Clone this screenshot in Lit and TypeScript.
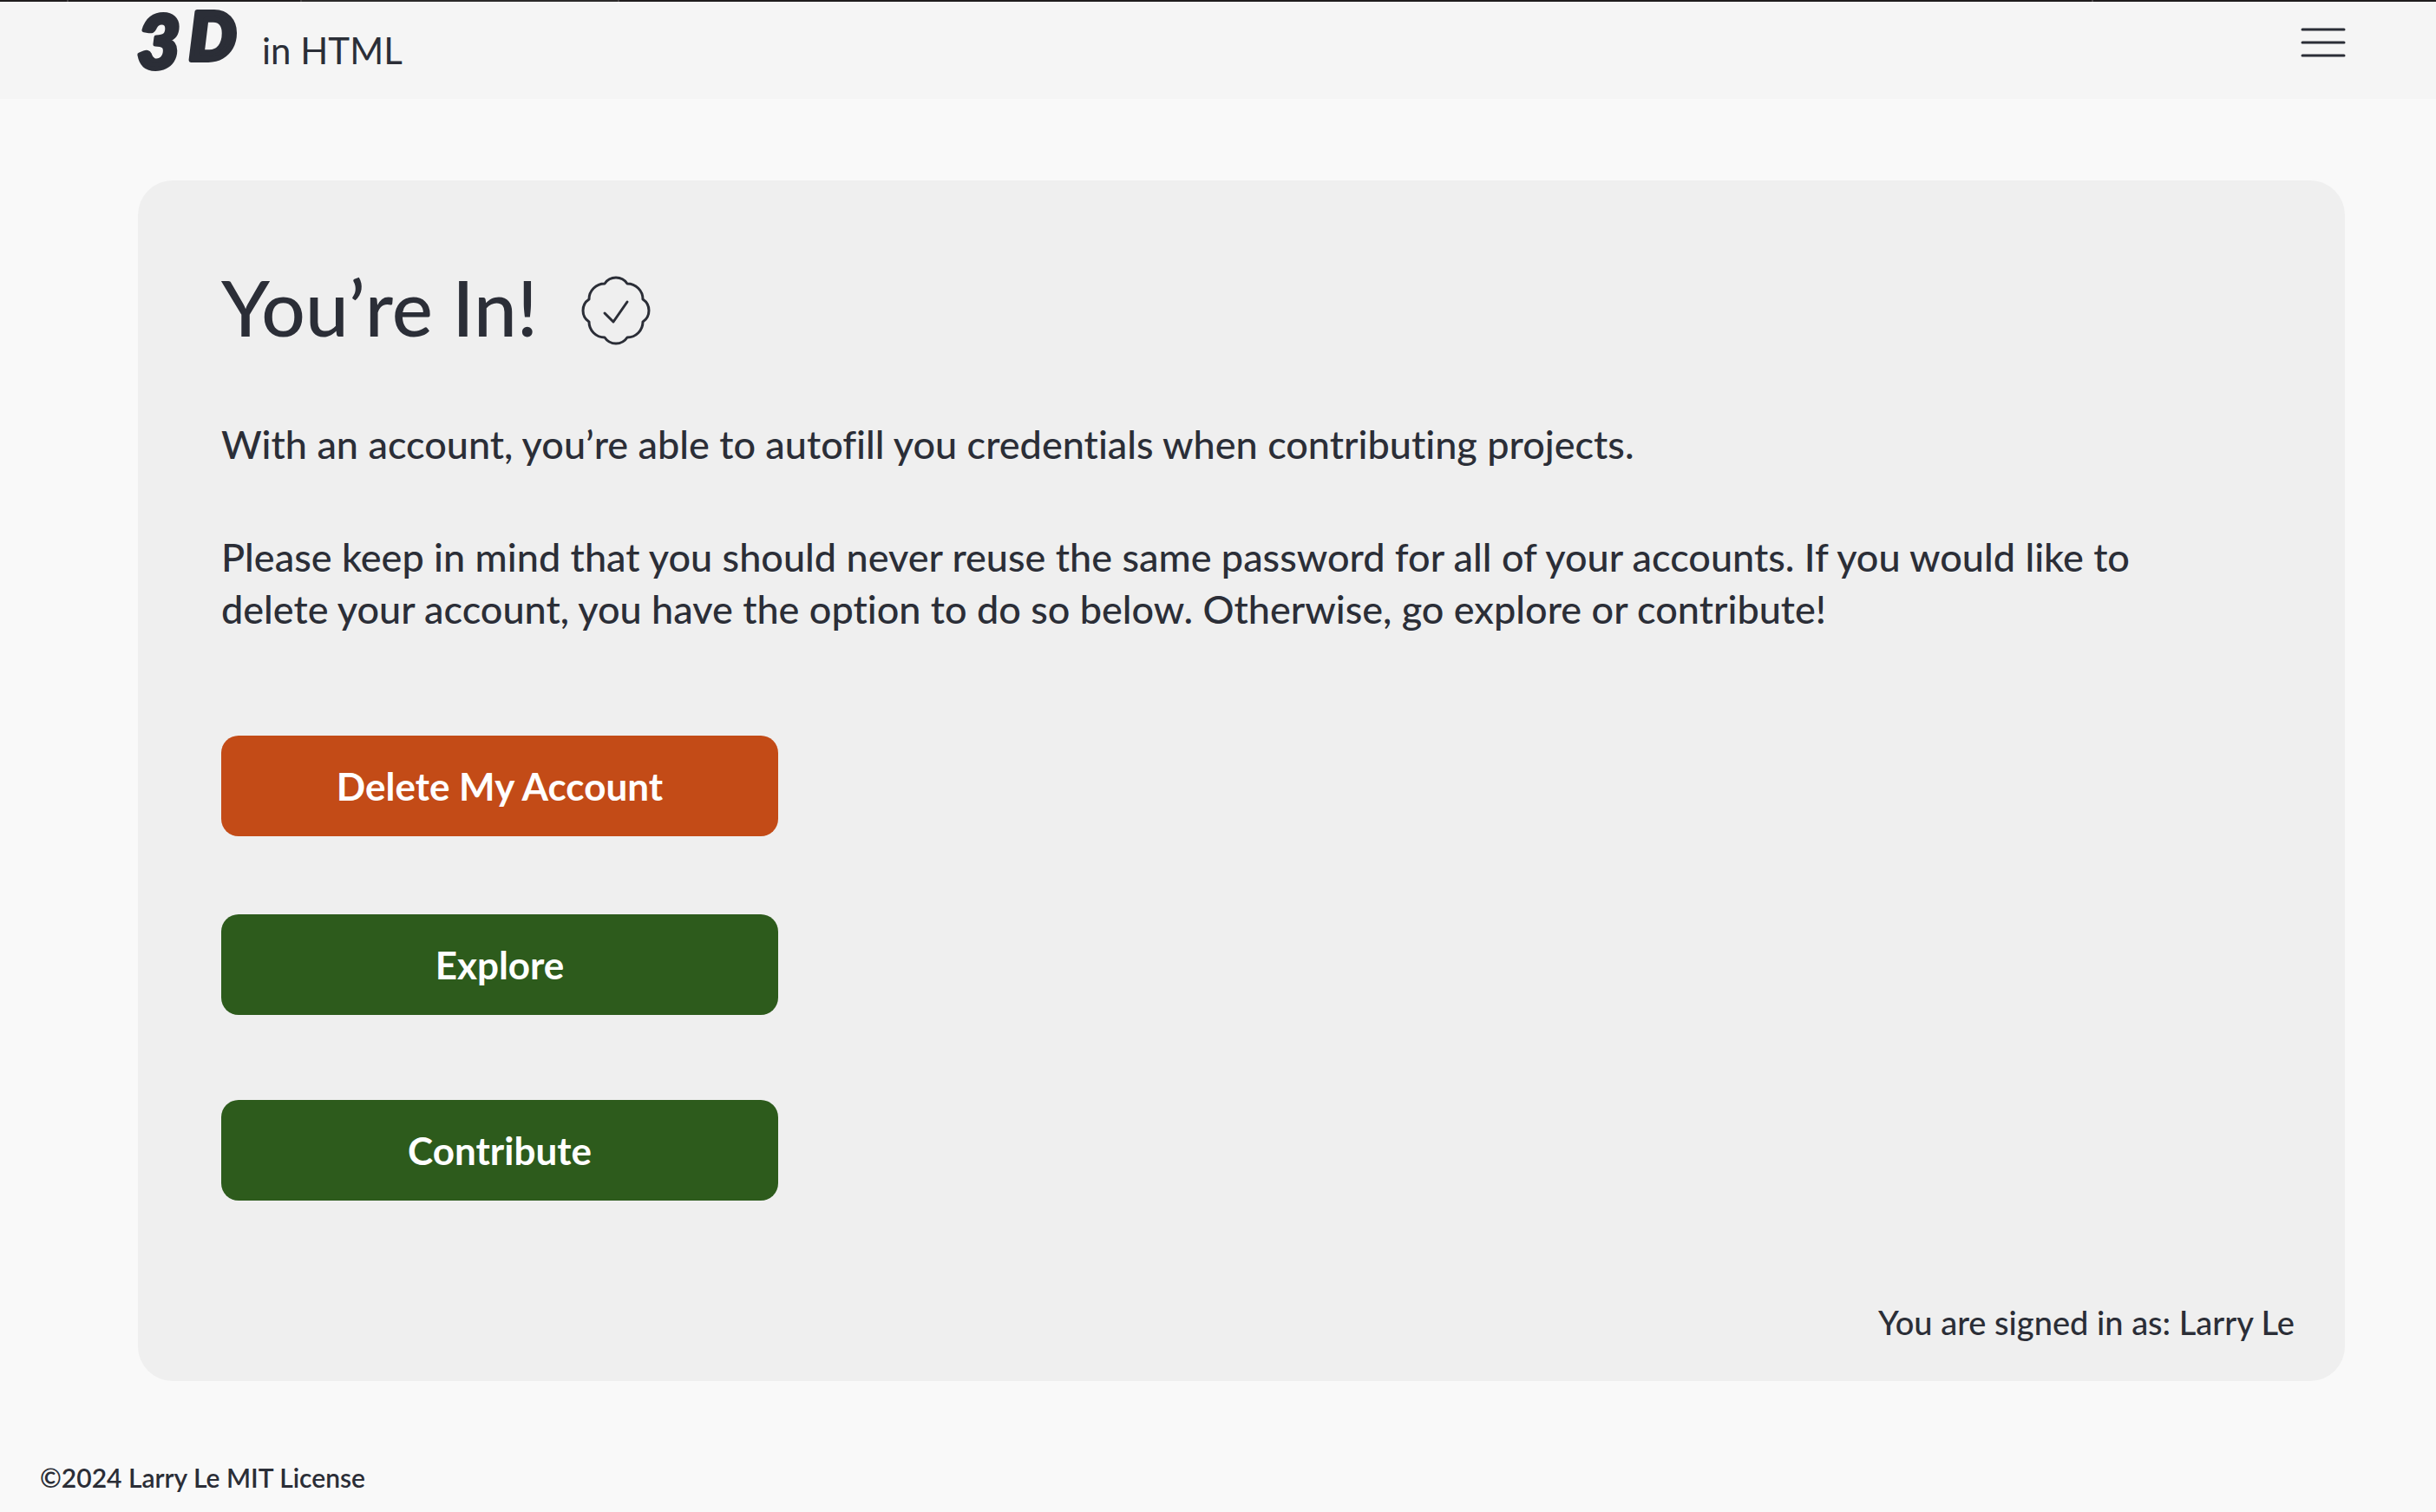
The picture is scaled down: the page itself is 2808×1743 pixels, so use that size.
import { LitElement, html, css } from "lit";
import { customElement, property } from "lit/decorators.js";

@customElement("site-header")
class SiteHeader extends LitElement {
  static styles = css`
    :host { display: block; }
    .strip {
      height: 2px;
      background: linear-gradient(
        to right,
        #1f1c1d 77px, #454243 77px 79px,
        #1f1c1d 79px 346px, #454243 346px 348px,
        #2c2a2a 348px 712px, #454243 712px 714px,
        #1f1c1d 714px calc(100% - 397px), #454243 calc(100% - 397px) calc(100% - 395px),
        #1f1c1d calc(100% - 395px)
      );
    }
    .bar {
      display: flex;
      justify-content: space-between;
      align-items: flex-start;
      height: 112px;
      padding: 0 104px 0 152px;
      background: #f5f5f5;
    }
    .brand {
      display: flex;
      gap: 22px;
      color: inherit;
      text-decoration: none;
    }
    .mark { display: block; overflow: visible; width: 128px; height: 90px; fill: #2b2e37; stroke: #2b2e37; stroke-linejoin: round; }
    .three { font: italic 900 86px Lato, sans-serif; stroke-width: 5; }
    .dee { font: italic 900 76px Lato, sans-serif; stroke-width: 6; }
    .name { padding-top: 26px; font-size: 42px; line-height: 60px; }
    .menu { margin-top: 20px; padding: 0; border: 0; background: none; cursor: pointer; }
    .lines { display: block; width: 52px; height: 52px; stroke: #2b2e37; stroke-width: 3; stroke-linecap: round; }
  `;
  render() {
    return html`
      <div class="strip"></div>
      <header class="bar">
        <a class="brand" href="#">
          <svg class="mark" viewBox="0 0 128 90" role="img" aria-label="3D">
            <text class="three" x="6" y="77">3</text>
            <text class="dee" x="66" y="67">D</text>
          </svg>
          <span class="name">in HTML</span>
        </a>
        <button class="menu" type="button" aria-label="Menu">
          <svg class="lines" viewBox="0 0 52 52"><path d="M2 12H50M2 27H50M2 42H50" /></svg>
        </button>
      </header>
    `;
  }
}

@customElement("account-card")
class AccountCard extends LitElement {
  @property() user = "";
  static styles = css`
    :host { display: block; }
    .card {
      display: flex;
      flex-direction: column;
      padding: 100px 58px 40px 96px;
      border-radius: 40px;
      background: #efefef;
    }
    .heading { display: flex; align-items: center; gap: 50px; padding-bottom: 74px; }
    .title { margin: 0; padding-bottom: 8px; font-size: 89px; font-weight: 500; line-height: 92px; }
    .seal { width: 80px; height: 80px; fill: none; stroke: #2b2e37; stroke-width: 3; stroke-linecap: round; stroke-linejoin: round; }
    .text { max-width: 2240px; margin: 0; font-size: 45px; font-weight: 500; line-height: 60px; }
    .text + .text { padding-top: 70px; }
    .actions { display: flex; flex-direction: column; align-items: flex-start; gap: 90px; padding-top: 116px; }
    .action {
      box-sizing: border-box;
      width: 642px;
      padding: 28px 40px;
      border: 0;
      border-radius: 20px;
      background: #2d5b1c;
      color: #ffffff;
      font: 700 44px/60px Lato, sans-serif;
      cursor: pointer;
      text-align: center;
      text-decoration: none;
    }
    .danger { background: #c34b17; }
    .last { margin-top: 8px; }
    .signed { margin: 0; padding-top: 112px; font-size: 38px; font-weight: 500; line-height: 56px; text-align: right; }
  `;
  render() {
    return html`
      <section class="card">
        <div class="heading">
          <h1 class="title">You’re In!</h1>
          <svg class="seal" viewBox="-40 -40 80 80" aria-hidden="true">
            <path d="M-13-31A15.6 15.6 0 0 1 13-31A18 18 0 0 1 31-13A15.6 15.6 0 0 1 31 13A18 18 0 0 1 13 31A15.6 15.6 0 0 1-13 31A18 18 0 0 1-31 13A15.6 15.6 0 0 1-31-13A18 18 0 0 1-13-31Z" />
            <path d="M-13 3L-3 13L13-10" />
          </svg>
        </div>
        <p class="text">With an account, you’re able to autofill you credentials when contributing projects.</p>
        <p class="text">Please keep in mind that you should never reuse the same password for all of your accounts. If you would like to delete your account, you have the option to do so below. Otherwise, go explore or contribute!</p>
        <div class="actions">
          <button class="action danger" type="button">Delete My Account</button>
          <a class="action" href="#explore">Explore</a>
          <a class="action last" href="#contribute">Contribute</a>
        </div>
        <p class="signed">You are signed in as: ${this.user}</p>
      </section>
    `;
  }
}

@customElement("app-root")
class AppRoot extends LitElement {
  static styles = css`
    :host {
      display: flex;
      flex-direction: column;
      min-height: 100vh;
      background: #f9f9f9;
      color: #2b2e37;
      font-family: Lato, sans-serif;
      font-variant-ligatures: none;
    }
    .main { flex: 1; padding: 94px 105px 60px 159px; }
    .footer { padding: 0 46px 22px; font-size: 30px; font-weight: 600; line-height: 36px; }
  `;
  render() {
    return html`
      <site-header></site-header>
      <main class="main"><account-card user="Larry Le"></account-card></main>
      <footer class="footer">©2024 Larry Le MIT License</footer>
    `;
  }
}
